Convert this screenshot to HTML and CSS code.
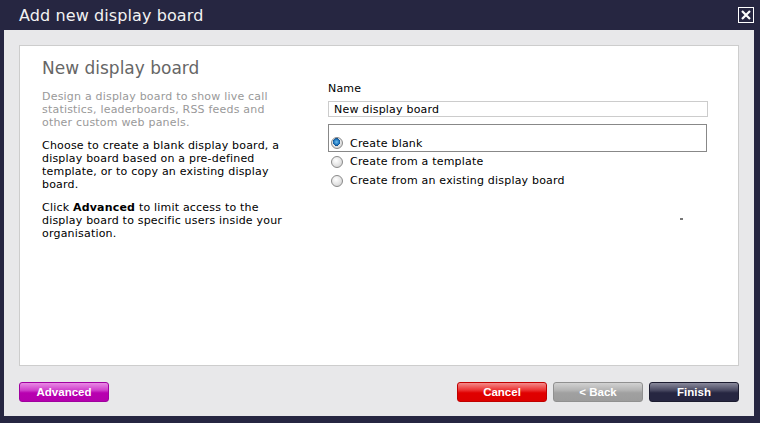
FILE: index.html
```html
<!DOCTYPE html>
<html lang="en">
<head>
  <meta charset="UTF-8" />
  <title>Add new display board</title>
  <link rel="stylesheet" href="styles.css">
</head>
<body>
  <div class="dialog">
    <header class="titlebar">
      <h1>Add new display board</h1>
      <button class="close" title="Close">
        <svg width="16" height="16" viewBox="0 0 16 16">
          <rect x="0.5" y="0.5" width="15" height="15" fill="none" stroke="#fff" stroke-width="1"/>
          <path d="M4 4 L12 12 M12 4 L4 12" stroke="#fff" stroke-width="2.2" fill="none"/>
        </svg>
      </button>
    </header>

    <div class="dialog-body">
      <section class="panel">
        <div class="intro">
          <h2>New display board</h2>
          <p class="muted">Design a display board to show live call statistics, leaderboards, RSS feeds and other custom web panels.</p>
          <p>Choose to create a blank display board, a display board based on a pre-defined template, or to copy an existing display board.</p>
          <p>Click <b>Advanced</b> to limit access to the display board to specific users inside your organisation.</p>
        </div>

        <div class="form">
          <label class="field-label" for="nameInput">Name</label>
          <input type="text" id="nameInput" value="New display board">

          <div class="choice-box">
            <label class="choice">
              <span class="radio checked"></span>
              Create blank
            </label>
          </div>
          <label class="choice">
            <span class="radio"></span>
            Create from a template
          </label>
          <label class="choice">
            <span class="radio"></span>
            Create from an existing display board
          </label>
          <div class="marker"></div>
        </div>
      </section>

      <footer class="actions">
        <button class="btn btn-advanced">Advanced</button>
        <div class="nav-buttons">
          <button class="btn btn-cancel">Cancel</button>
          <button class="btn btn-back">&lt; Back</button>
          <button class="btn btn-finish">Finish</button>
        </div>
      </footer>
    </div>
  </div>
</body>
</html>
```

FILE: styles.css
```css
* {
  box-sizing: border-box;
}
body {
  margin: 0;
  background: #262641;
  font-family: "DejaVu Sans", Verdana, sans-serif;
}
.dialog {
  width: 760px;
  height: 423px;
  background: #262641;
}
.titlebar {
  height: 30px;
  display: flex;
  align-items: center;
  justify-content: space-between;
  padding: 0 6px 0 19px;
}
.titlebar h1 {
  margin: 0;
  font-size: 16px;
  font-weight: normal;
  color: #f2f2f2;
  letter-spacing: 0.1px;
}
.close {
  width: 16px;
  height: 16px;
  padding: 0;
  border: none;
  background: none;
  cursor: pointer;
  display: block;
}
.close svg {
  display: block;
}
.dialog-body {
  margin: 0 6px 0 4px;
  height: 386px;
  background: #e8e8ea;
  padding: 15px 15px 0 15px;
}
.panel {
  height: 321px;
  background: #fff;
  border: 1px solid #cdcdcd;
  display: grid;
  grid-template-columns: 250px 380px;
  column-gap: 36px;
  padding: 0 0 0 22px;
}
.intro h2 {
  margin: 12px 0 12px;
  font-size: 17px;
  font-weight: normal;
  color: #666;
}
.intro p {
  margin: 0 0 10px;
  font-size: 11px;
  line-height: 13px;
  letter-spacing: 0.2px;
  color: #000;
}
.intro p.muted {
  color: #999;
}
.form {
  padding-top: 36px;
  font-size: 11px;
  letter-spacing: 0.2px;
}
.field-label {
  display: block;
  line-height: 13px;
  color: #000;
  margin-bottom: 6px;
}
.form input[type="text"] {
  display: block;
  width: 380px;
  height: 16px;
  border: 1px solid #ccc;
  padding: 0 5px;
  font-family: inherit;
  font-size: 11px;
  letter-spacing: 0.2px;
  margin: 0 0 7px;
  outline: none;
}
.choice-box {
  width: 379px;
  height: 28px;
  border: 1px solid #888;
  padding-top: 11px;
}
.choice {
  display: flex;
  align-items: center;
  height: 19px;
  padding-left: 3px;
  color: #000;
  cursor: pointer;
}
.choice-box .choice {
  height: 14px;
  padding-left: 2px;
}
.radio {
  width: 12px;
  height: 12px;
  border-radius: 50%;
  border: 1px solid #8a8a8a;
  background: radial-gradient(circle at 40% 35%, #fff 0%, #e6e6e6 50%, #c8c8c8 100%);
  margin-right: 7px;
  flex: none;
}
.radio.checked {
  background:
    radial-gradient(circle at 45% 40%, #6fc0f0 0%, #1a70b8 35%, #0c4c8a 45%, transparent 47%),
    radial-gradient(circle at 40% 35%, #fff 0%, #e6e6e6 50%, #c8c8c8 100%);
}
.marker {
  width: 3px;
  height: 2px;
  background: #777;
  margin: 28px 0 0 352px;
}
.actions {
  display: flex;
  justify-content: space-between;
  margin-top: 16px;
}
.nav-buttons {
  display: flex;
  gap: 6px;
}
.btn {
  width: 90px;
  height: 20px;
  padding: 0;
  border-radius: 3px;
  font-family: "Liberation Sans", Arial, sans-serif;
  font-size: 11.5px;
  font-weight: bold;
  color: #fff;
  cursor: pointer;
  text-align: center;
}
.btn-advanced {
  border: 1px solid #a000a0;
  background: linear-gradient(#e88ae4 0%, #d040cc 40%, #b800b0 55%, #b400ac 100%);
}
.btn-cancel {
  border: 1px solid #c00000;
  background: linear-gradient(#f48a8a 0%, #ec3030 40%, #e00000 55%, #dc0000 100%);
}
.btn-back {
  border: 1px solid #909090;
  background: linear-gradient(#d2d2d2 0%, #b4b4b4 40%, #a0a0a0 55%, #9c9c9c 100%);
}
.btn-finish {
  border: 1px solid #1c1c30;
  background: linear-gradient(#8a8a9c 0%, #4a4a62 40%, #262641 55%, #262641 100%);
}
```
